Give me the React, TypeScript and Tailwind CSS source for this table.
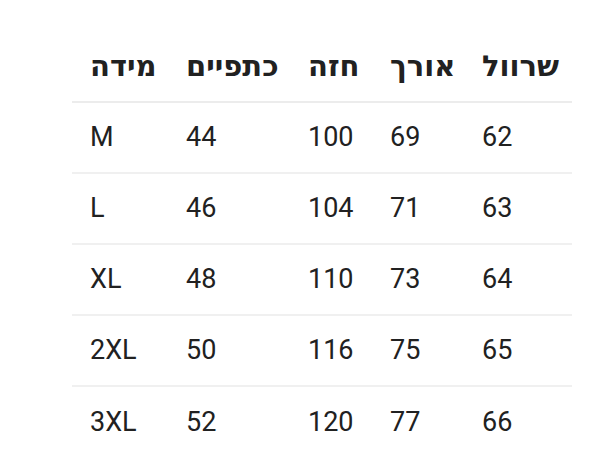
const headers = ["מידה", "כתפיים", "חזה", "אורך", "שרוול"];

const rows = [
	["M", "44", "100", "69", "62"],
	["L", "46", "104", "71", "63"],
	["XL", "48", "110", "73", "64"],
	["2XL", "50", "116", "75", "65"],
	["3XL", "52", "120", "77", "66"],
];

const colWidths = ["w-[96px]", "w-[122px]", "w-[82px]", "w-[92px]", "w-[108px]"];

export default function App() {
	return (
		<div className="w-[600px] h-[472px] bg-white font-['Roboto','Noto_Sans','DejaVu_Sans',sans-serif] text-[#212121] overflow-hidden">
			<table className="ml-[72px] mt-[34px] w-[500px] table-fixed border-collapse">
				<colgroup>
					{colWidths.map((w) => (
						<col key={w} className={w} />
					))}
				</colgroup>
				<thead>
					<tr className="border-b-2 border-[#ececec]">
						{headers.map((h) => (
							<th
								key={h}
								className="h-[68px] pl-[18px] text-left align-middle text-[29px] font-semibold pb-[2px]"
							>
								{h}
							</th>
						))}
					</tr>
				</thead>
				<tbody>
					{rows.map((r, ri) => (
						<tr
							key={r[0]}
							className={ri < rows.length - 1 ? "border-b-2 border-[#f0f0f0]" : ""}
						>
							{r.map((c, ci) => (
								<td key={ci} className="h-[71px] pl-[18px] text-left align-middle text-[27px]">
									{c}
								</td>
							))}
						</tr>
					))}
				</tbody>
			</table>
		</div>
	);
}
